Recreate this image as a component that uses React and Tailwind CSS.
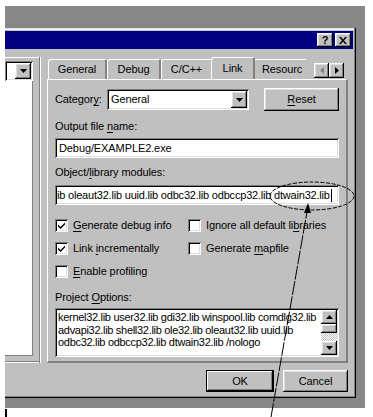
const FONT = { fontFamily: '"Liberation Sans", Arial, sans-serif' };

const raised =
  "shadow-[inset_-1px_-1px_#000,inset_1px_1px_#fff,inset_-2px_-2px_#808080,inset_2px_2px_#dfdfdf]";
const sunken =
  "shadow-[inset_1px_1px_#808080,inset_-1px_-1px_#fff,inset_2px_2px_#000,inset_-2px_-2px_#dfdfdf]";

function DownArrow() {
  return (
    <svg width="7" height="4" viewBox="0 0 7 4">
      <path d="M0 0h7L3.5 4z" fill="#000" />
    </svg>
  );
}

function DropBtn({ w = 16 }) {
  return (
    <div className={`h-full ${raised} bg-[#c0c0c0] flex items-center justify-center shrink-0`} style={{ width: w }}>
      <DownArrow />
    </div>
  );
}

function U({ children }) {
  return <span className="underline underline-offset-[2px]">{children}</span>;
}

function Check({ checked, children }) {
  return (
    <div className="flex items-center gap-[5px] h-[13px] whitespace-nowrap">
      <div className={`w-[13px] h-[13px] shrink-0 bg-white ${sunken} flex items-center justify-center`}>
        {checked && (
          <svg width="7" height="7" viewBox="0 0 7 7">
            <path d="M0 2.5l2.5 2.5L7 0.5v2L2.5 7 0 4.5z" fill="#000" />
          </svg>
        )}
      </div>
      <span>{children}</span>
    </div>
  );
}

function Tab({ label, active, w }) {
  return (
    <div
      className={`relative flex items-center justify-center ${active ? "h-[22px] -mx-[2px] z-10 bg-[#c0c0c0]" : "h-[20px]"} rounded-t-[3px] border-t border-l border-white border-r-2 border-r-[#808080]`}
      style={{ width: w }}
    >
      {label}
    </div>
  );
}

export default function App() {
  return (
    <div className="w-[373px] h-[417px] bg-white overflow-hidden relative text-[11px] tracking-[-0.1px] text-black" style={FONT}>
      <div className="ml-[5px] mt-[6px] w-[360px] h-[402px] bg-[#878787] pt-[22px]">
        {/* dialog */}
        <div className="w-[351px] h-[370px] bg-[#c0c0c0] pt-[3px] pr-[3px] pb-[3px] flex flex-col shadow-[inset_-1px_-1px_#000,inset_-2px_-2px_#808080,inset_0_1px_#dfdfdf,inset_0_2px_#fff]">
          {/* title bar */}
          <div className="h-[18px] bg-[#000080] flex items-center justify-end pr-[2px] gap-[2px]">
            <div className={`w-[16px] h-[14px] ${raised} bg-[#c0c0c0] flex items-center justify-center font-bold text-[11px] leading-none`}>?</div>
            <div className={`w-[16px] h-[14px] ${raised} bg-[#c0c0c0] flex items-center justify-center`}>
              <svg width="8" height="7" viewBox="0 0 8 7">
                <path d="M0 0h2l2 2.5L6 0h2L5 3.5 8 7H6L4 4.5 2 7H0l3-3.5z" fill="#000" />
              </svg>
            </div>
          </div>

          {/* body */}
          <div className="flex flex-1">
            {/* left pane */}
            <div className="w-[36px] mt-[8px] h-[306px] shadow-[inset_-1px_0_#fff,inset_-2px_0_#808080,inset_0_-1px_#fff,inset_0_-2px_#808080,inset_0_1px_#fff] pt-[4px]">
              <div className={`w-[28px] h-[20px] bg-white ${sunken} flex justify-end p-[2px]`}>
                <DropBtn w={16} />
              </div>
              <div className="w-[28px] h-[275px] bg-white shadow-[inset_-1px_0_#808080,inset_0_-1px_#808080]" />
            </div>

            {/* right pane */}
            <div className="ml-[6px] mt-[8px] flex flex-col">
              {/* tabs */}
              <div className="h-[22px] flex items-end pl-[1px]">
                <Tab label="General" w={59} />
                <Tab label="Debug" w={54} />
                <Tab label="C/C++" w={52} />
                <Tab label="Link" w={44} active />
                <div className="h-[20px] w-[53px] rounded-tl-[3px] border-t border-l border-white flex items-center pl-[8px] overflow-hidden whitespace-nowrap">
                  Resourc
                </div>
                <div className="flex self-start mt-[6px] ml-[8px]">
                  <div className={`w-[15px] h-[15px] ${raised} bg-[#c0c0c0] flex items-center justify-center`}>
                    <svg width="4" height="7" viewBox="0 0 4 7">
                      <path d="M4 0v7L0 3.5z" fill="#808080" />
                    </svg>
                  </div>
                  <div className={`w-[15px] h-[15px] ${raised} bg-[#c0c0c0] flex items-center justify-center`}>
                    <svg width="4" height="7" viewBox="0 0 4 7">
                      <path d="M0 0v7L4 3.5z" fill="#000" />
                    </svg>
                  </div>
                </div>
              </div>

              {/* panel */}
              <div className="w-[301px] h-[284px] border-t border-l border-white border-r-2 border-r-[#808080] border-b-2 border-b-[#808080] pl-[7px] pr-[7px] pt-[8px] flex flex-col">
                <div className="flex items-center h-[23px]">
                  <span className="w-[52px]">Categor<U>y</U>:</span>
                  <div className={`w-[142px] h-[21px] bg-white ${sunken} flex items-center pl-[4px] pr-[2px] py-[2px]`}>
                    <span className="flex-1">General</span>
                    <DropBtn w={16} />
                  </div>
                  <div className={`ml-[15px] w-[75px] h-[23px] ${raised} bg-[#c0c0c0] flex items-center justify-center`}>
                    <span><U>R</U>eset</span>
                  </div>
                </div>

                <div className="mt-[9px] h-[13px] leading-[13px]">Output file <U>n</U>ame:</div>
                <div className={`mt-[5px] w-[284px] h-[20px] bg-white ${sunken} flex items-center pl-[4px]`}>Debug/EXAMPLE2.exe</div>

                <div className="mt-[8px] h-[13px] leading-[13px]">Object/<U>l</U>ibrary modules:</div>
                <div className={`mt-[6px] w-[284px] h-[20px] bg-white ${sunken} flex items-center pl-[2px] pr-[2px] whitespace-nowrap overflow-hidden tracking-[-0.2px]`}>
                  <span className="shrink-0">ib oleaut32.lib uuid.lib odbc32.lib odbccp32.lib dtwain32.lib</span>
                  <span className="w-px h-[13px] bg-black ml-[1px] shrink-0" />
                </div>

                <div className="mt-[14px] grid grid-cols-[133px_1fr] gap-y-[10px]">
                  <Check checked><U>G</U>enerate debug info</Check>
                  <Check>Ignore all default li<U>b</U>raries</Check>
                  <Check checked>Link <U>i</U>ncrementally</Check>
                  <Check>Generate <U>m</U>apfile</Check>
                  <Check><U>E</U>nable profiling</Check>
                </div>

                <div className="mt-[13px] h-[13px] leading-[13px]">Project <U>O</U>ptions:</div>
                <div className={`mt-[4px] w-[284px] h-[49px] bg-white ${sunken} flex p-[2px]`}>
                  <div className="flex-1 pl-[1px] pt-[1px] leading-[12.5px] whitespace-nowrap overflow-hidden tracking-[-0.3px]">
                    <div>kernel32.lib user32.lib gdi32.lib winspool.lib comdlg32.lib</div>
                    <div>advapi32.lib shell32.lib ole32.lib oleaut32.lib uuid.lib</div>
                    <div>odbc32.lib odbccp32.lib dtwain32.lib /nologo</div>
                  </div>
                  <div className="w-[16px] flex flex-col shrink-0">
                    <div className={`h-[14px] ${raised} bg-[#c0c0c0] flex items-center justify-center`}>
                      <svg width="7" height="4" viewBox="0 0 7 4">
                        <path d="M0 4h7L3.5 0z" fill="#000" />
                      </svg>
                    </div>
                    <div className={`h-[9px] ${raised} bg-[#c0c0c0]`} />
                    <div className="flex-1 bg-[repeating-conic-gradient(#fff_0_25%,#c0c0c0_0_50%)] bg-[length:2px_2px]" />
                    <div className={`h-[14px] ${raised} bg-[#c0c0c0] flex items-center justify-center`}>
                      <DownArrow />
                    </div>
                  </div>
                </div>
              </div>

              {/* buttons */}
              <div className="mt-[7px] flex justify-end gap-[9px]">
                <div className="w-[68px] h-[22px] bg-[#c0c0c0] border border-black flex items-center justify-center shadow-[inset_-1px_-1px_#000,inset_1px_1px_#fff,inset_-2px_-2px_#808080]">
                  OK
                </div>
                <div className={`w-[65px] h-[22px] ${raised} bg-[#c0c0c0] flex items-center justify-center`}>Cancel</div>
              </div>
            </div>
          </div>
        </div>
      </div>

      {/* annotation */}
      <svg className="absolute inset-0 pointer-events-none" width="373" height="417">
        <ellipse cx="312" cy="196" rx="42" ry="14" fill="none" stroke="#000" strokeWidth="1" strokeDasharray="4 1.5" />
        <line x1="271" y1="417" x2="307" y2="212" stroke="#000" strokeWidth="1" strokeDasharray="14 1.5" />
        <path d="M308 203l-4 10h7z" fill="#000" />
      </svg>
      <div className="absolute left-[5px] top-[409px] w-[2px] h-[8px] bg-black" />
    </div>
  );
}
